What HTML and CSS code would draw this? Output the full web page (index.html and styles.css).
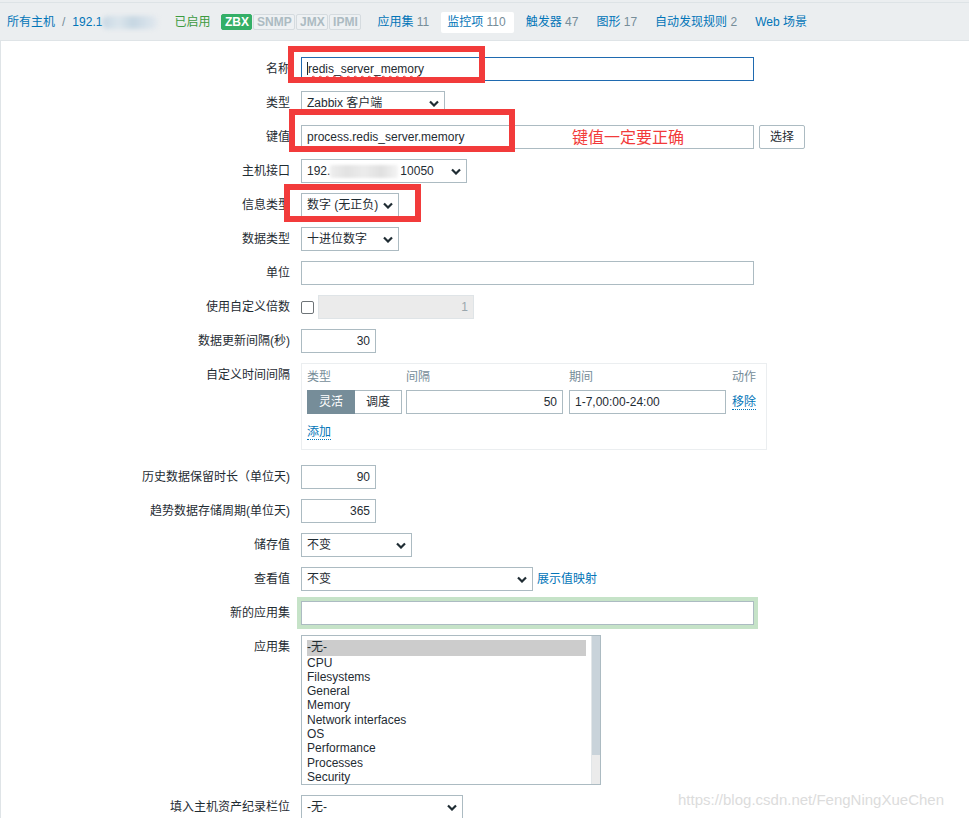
FILE: index.html
```html
<!DOCTYPE html>
<html lang="zh">
<head>
<meta charset="utf-8">
<title>监控项</title>
<link rel="stylesheet" href="styles.css">
</head>
<body>
<div class="page">
  <header class="topbar">
    <a class="link crumb">所有主机</a>
    <span class="sep">/</span>
    <a class="link">192.1</a><span class="blur blur-top"></span>
    <span class="status">已启用</span>
    <span class="badges">
      <span class="badge on">ZBX</span><span class="badge b-snmp">SNMP</span><span class="badge b-jmx">JMX</span><span class="badge b-ipmi">IPMI</span>
    </span>
    <nav class="tabs">
      <a class="tab">应用集 <span class="count">11</span></a>
      <a class="tab active">监控项 <span class="count">110</span></a>
      <a class="tab">触发器 <span class="count">47</span></a>
      <a class="tab">图形 <span class="count">17</span></a>
      <a class="tab">自动发现规则 <span class="count">2</span></a>
      <a class="tab">Web 场景</a>
    </nav>
  </header>

  <main class="content">
    <div class="form">
      <div class="lbl">名称</div>
      <div class="field"><div class="input w-full focused"><span class="caret"></span><span class="spell">redis_server_memory</span></div></div>

      <div class="lbl">类型</div>
      <div class="field"><div class="select w-type"><span>Zabbix 客户端</span><svg class="chev" viewBox="0 0 10 6"><path d="M1 1 L5 5 L9 1"/></svg></div></div>

      <div class="lbl">键值</div>
      <div class="field row-inline"><div class="input w-full">process.redis_server.memory</div><button class="btn">选择</button></div>

      <div class="lbl">主机接口</div>
      <div class="field"><div class="select w-iface"><span>192.</span><span class="blur blur-ip"></span><span>10050</span><svg class="chev" viewBox="0 0 10 6"><path d="M1 1 L5 5 L9 1"/></svg></div></div>

      <div class="lbl">信息类型</div>
      <div class="field"><div class="select w-info"><span>数字 (无正负)</span><svg class="chev" viewBox="0 0 10 6"><path d="M1 1 L5 5 L9 1"/></svg></div></div>

      <div class="lbl">数据类型</div>
      <div class="field"><div class="select w-info"><span>十进位数字</span><svg class="chev" viewBox="0 0 10 6"><path d="M1 1 L5 5 L9 1"/></svg></div></div>

      <div class="lbl">单位</div>
      <div class="field"><div class="input w-full"></div></div>

      <div class="lbl">使用自定义倍数</div>
      <div class="field row-inline"><span class="checkbox"></span><div class="input disabled w-mult">1</div></div>

      <div class="lbl">数据更新间隔(秒)</div>
      <div class="field"><div class="input num w-small">30</div></div>

      <div class="lbl">自定义时间间隔</div>
      <div class="field">
        <div class="intervals">
          <div class="iv-row iv-head">
            <span class="c-type">类型</span><span class="c-int">间隔</span><span class="c-per">期间</span><span class="c-act">动作</span>
          </div>
          <div class="iv-row iv-ctrl">
            <span class="c-type toggle"><span class="tg on">灵活</span><span class="tg">调度</span></span>
            <span class="c-int input num">50</span>
            <span class="c-per input">1-7,00:00-24:00</span>
            <span class="c-act"><a class="link dotted">移除</a></span>
          </div>
          <div class="iv-add"><a class="link dotted">添加</a></div>
        </div>
      </div>

      <div class="lbl">历史数据保留时长（单位天)</div>
      <div class="field"><div class="input num w-small">90</div></div>

      <div class="lbl">趋势数据存储周期(单位天)</div>
      <div class="field"><div class="input num w-small">365</div></div>

      <div class="lbl">储存值</div>
      <div class="field"><div class="select w-store"><span>不变</span><svg class="chev" viewBox="0 0 10 6"><path d="M1 1 L5 5 L9 1"/></svg></div></div>

      <div class="lbl">查看值</div>
      <div class="field row-inline"><div class="select w-view"><span>不变</span><svg class="chev" viewBox="0 0 10 6"><path d="M1 1 L5 5 L9 1"/></svg></div><a class="link map">展示值映射</a></div>

      <div class="lbl">新的应用集</div>
      <div class="field"><div class="input w-full glow"></div></div>

      <div class="lbl">应用集</div>
      <div class="field">
        <div class="listbox">
          <ul class="options">
            <li class="sel">-无-</li>
            <li>CPU</li>
            <li>Filesystems</li>
            <li>General</li>
            <li>Memory</li>
            <li>Network interfaces</li>
            <li>OS</li>
            <li>Performance</li>
            <li>Processes</li>
            <li>Security</li>
          </ul>
          <div class="scroll"><div class="thumb"></div></div>
        </div>
      </div>

      <div class="lbl">填入主机资产纪录栏位</div>
      <div class="field"><div class="select w-inv"><span>-无-</span><svg class="chev" viewBox="0 0 10 6"><path d="M1 1 L5 5 L9 1"/></svg></div></div>
    </div>
  </main>

  <div class="mark mark-name"></div>
  <div class="mark mark-key"></div>
  <div class="mark mark-info"></div>
  <div class="note">键值一定要正确</div>
  <div class="watermark">https://blog.csdn.net/FengNingXueChen</div>
</div>
</body>
</html>
```

FILE: styles.css
```css
* { box-sizing: border-box; }

html, body {
  margin: 0;
  padding: 0;
}

body {
  background: #ebeef0;
  font-family: "Liberation Sans", Arial, "Noto Sans CJK SC", sans-serif;
  font-size: 12px;
  line-height: 14px;
  color: #1f2c33;
  width: 969px;
  height: 818px;
  overflow: hidden;
}

.page {
  position: relative;
  height: 818px;
  display: flex;
  flex-direction: column;
}

.link {
  color: #0275b8;
  text-decoration: none;
  cursor: pointer;
}

.dotted {
  border-bottom: 1px dotted #0275b8;
}

/* ---------- top bar ---------- */
.topbar {
  margin-top: 2px;
  height: 38px;
  border-top: 1px solid #dde3e6;
  display: flex;
  align-items: center;
  padding-left: 7px;
  padding-top: 1px;
  flex: none;
}

.sep {
  color: #768d99;
  margin: 0 7px;
}

.blur {
  display: inline-block;
  filter: blur(2px);
  border-radius: 6px;
}

.blur-top {
  width: 56px;
  height: 13px;
  background: linear-gradient(90deg, #c8d8e4, #dbe5ec 30%, #c6d6e2 55%, #d6e1ea 80%, #e3e9ee);
}

.status {
  color: #3d9b41;
  margin-left: 16px;
}

.badges {
  display: flex;
  gap: 1px;
  margin-left: 11px;
}

.badge {
  height: 16px;
  line-height: 14px;
  border: 1px solid #d5dbdf;
  border-radius: 2px;
  background: #eef1f3;
  color: #acbbc2;
  text-align: center;
  font-weight: bold;
  font-size: 12px;
}

.badge.on {
  background: #34af67;
  border-color: #34af67;
  color: #fff;
  width: 31px;
}

.b-snmp { width: 42px; }
.b-jmx { width: 32px; }
.b-ipmi { width: 32px; }

.tabs {
  display: flex;
  align-items: center;
  margin-left: 10px;
  gap: 6px;
}

.tab {
  color: #0275b8;
  padding: 0 6px;
  height: 21px;
  line-height: 21px;
  border-radius: 2px;
}

.tab .count {
  color: #768d99;
}

.tab.active {
  background: #fff;
  padding: 0 8px 0 6px;
}

/* ---------- content ---------- */
.content {
  flex: 1;
  background: #fff;
  border-top: 1px solid #dfe4e7;
  border-left: 1px solid #dfe4e7;
  padding-top: 16px;
}

.form {
  display: grid;
  grid-template-columns: 289px 1fr;
  column-gap: 11px;
  row-gap: 10px;
}

.lbl {
  text-align: right;
  line-height: 24px;
  white-space: nowrap;
}

.field {
  min-height: 24px;
}

.row-inline {
  display: flex;
  align-items: center;
  gap: 5px;
}

.input,
.select {
  height: 24px;
  border: 1px solid #acbbc2;
  background: #fff;
  padding: 0 5px;
  line-height: 22px;
  white-space: nowrap;
  overflow: hidden;
  color: #1f2c33;
}

.input.num { text-align: right; }

.w-full { width: 453px; }
.w-small { width: 75px; }
.w-mult { width: 156px; }

.focused {
  border-color: #1f6ab0;
  position: relative;
}

.caret {
  display: inline-block;
  width: 1px;
  height: 13px;
  background: #1f2c33;
  vertical-align: -2px;
}

.spell {
  text-decoration: underline wavy #e33;
  text-decoration-thickness: 1px;
  text-underline-offset: 2px;
}

.disabled {
  background: #ebebeb;
  border-color: #dfe4e7;
  color: #9aa6ad;
  text-align: right;
}

.checkbox {
  width: 13px;
  height: 13px;
  border: 1px solid #6e7478;
  border-radius: 2px;
  background: #fff;
  margin-right: -1px;
}

.glow {
  border-color: #acbbc2;
  box-shadow: 0 0 0 4px #c6e3c8;
}

.btn {
  height: 24px;
  width: 46px;
  border: 1px solid #acbbc2;
  border-radius: 2px;
  background: #fff;
  font: inherit;
  color: #1f2c33;
  padding: 0;
}

/* selects */
.select {
  display: flex;
  align-items: center;
  position: relative;
  padding-right: 20px;
}

.chev {
  position: absolute;
  right: 5px;
  top: 8px;
  width: 10px;
  height: 7px;
  fill: none;
  stroke: #1f2c33;
  stroke-width: 2.2;
}

.w-type { width: 144px; }
.w-iface { width: 166px; }
.w-info { width: 98px; }
.w-store { width: 111px; }
.w-view { width: 232px; }
.w-inv { width: 162px; }

.blur-ip {
  width: 68px;
  height: 13px;
  background: linear-gradient(90deg, #eeeeee, #e2e2e2 25%, #ececec 50%, #e0e0e0 75%, #f4f4f4);
  filter: blur(1.5px);
  border-radius: 2px;
  margin: 0 2px 0 0;
}

.map { margin-left: -1px; }

/* custom intervals */
.intervals {
  width: 466px;
  border: 1px solid #ebeef0;
  padding: 4px 5px 8px 5px;
  margin-bottom: 5px;
}

.iv-row {
  display: flex;
  align-items: center;
}

.iv-head {
  line-height: 18px;
  color: #768d99;
}

.iv-ctrl {
  margin-top: 4px;
  height: 24px;
}

.c-type { width: 95px; margin-right: 4px; flex: none; }
.c-int { width: 157px; margin-right: 6px; flex: none; }
.c-per { width: 157px; margin-right: 6px; flex: none; }
.c-act { flex: none; }

.toggle {
  display: flex;
  height: 24px;
}

.tg {
  flex: 1;
  border: 1px solid #acbbc2;
  line-height: 22px;
  text-align: center;
  background: #fff;
}

.tg + .tg { border-left: none; }

.tg.on {
  background: #768d99;
  border-color: #768d99;
  color: #fff;
}

.iv-add {
  margin-top: 10px;
  line-height: 17px;
}

/* listbox */
.listbox {
  width: 300px;
  height: 150px;
  border: 1px solid #acbbc2;
  display: flex;
  background: #fff;
}

.options {
  list-style: none;
  margin: 0;
  padding: 4px 5px 0 5px;
  flex: 1;
  overflow: hidden;
}

.options li {
  line-height: 14.3px;
  height: 14.3px;
  white-space: nowrap;
  color: #1f2c33;
}

.options li.sel {
  background: #cccccc;
  height: 15.5px;
  line-height: 15.5px;
}

.scroll {
  width: 9px;
  background: #ebebeb;
  border-left: 1px solid #e2e6e8;
}

.thumb {
  height: 119px;
  background: #c9d3da;
}

/* annotations */
.mark {
  position: absolute;
  border: 6px solid #f23b3b;
}

.mark-name { left: 288px; top: 46px; width: 197px; height: 37px; }
.mark-key { left: 289px; top: 109px; width: 226px; height: 43px; }
.mark-info { left: 284px; top: 184px; width: 137px; height: 38px; }

.note {
  position: absolute;
  left: 572px;
  top: 128px;
  font-size: 16px;
  line-height: 20px;
  color: #f23b3b;
}

.watermark {
  position: absolute;
  left: 678px;
  top: 791px;
  font-size: 15px;
  line-height: 18px;
  color: #dcdcdc;
  font-family: "Liberation Sans", Arial, sans-serif;
}
```
